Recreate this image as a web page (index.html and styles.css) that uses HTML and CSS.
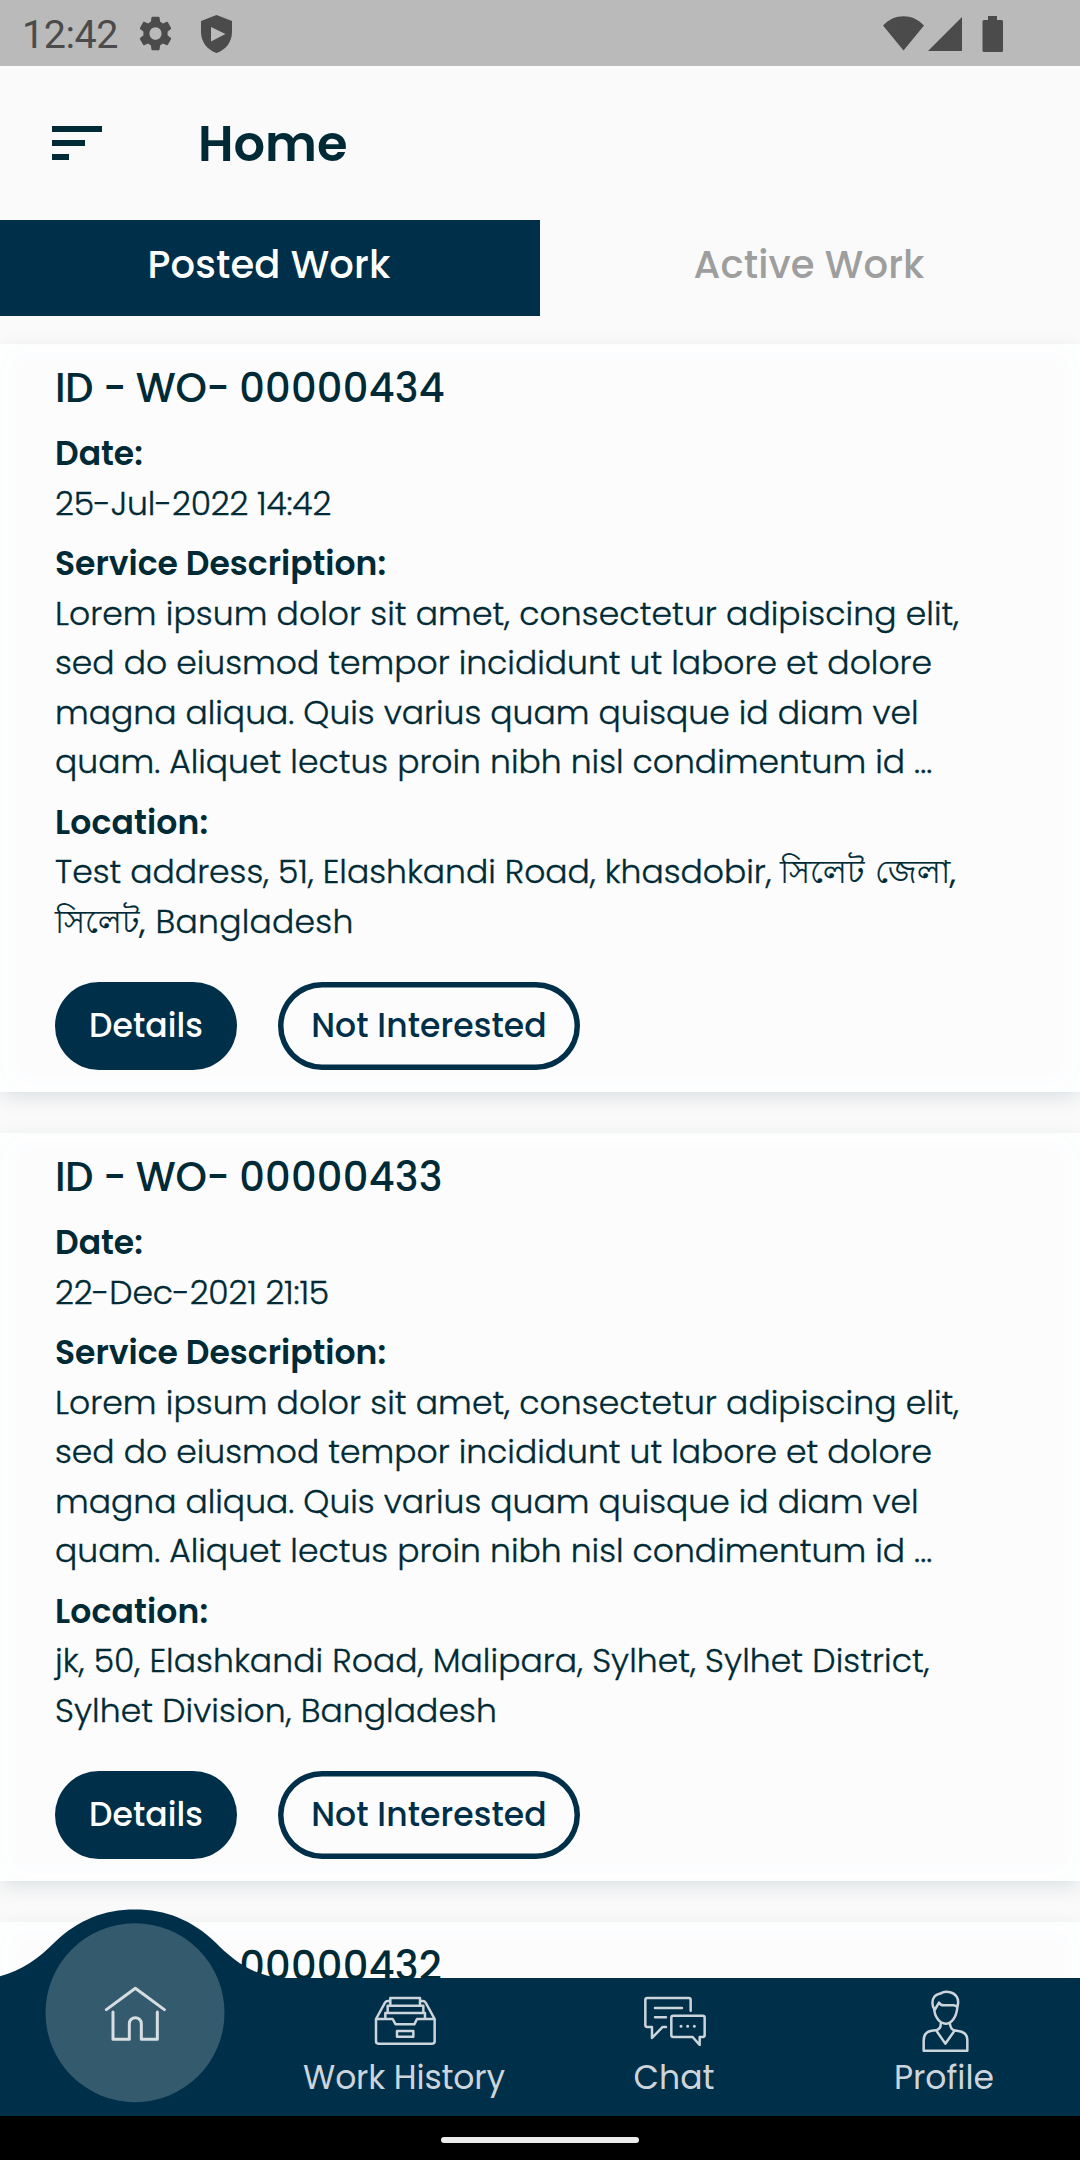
FILE: index.html
```
<!DOCTYPE html>
<html lang="en">
<head>
<meta charset="utf-8">
<title>Home</title>
<link rel="stylesheet" href="styles.css">
</head>
<body>
<div class="status">
  <span class="clock">12:42</span>
  <svg class="gear" viewBox="2.2 2 19.6 20" preserveAspectRatio="none"><path d="M19.14 12.94c.04-.3.06-.61.06-.94 0-.32-.02-.64-.07-.94l2.03-1.58c.18-.14.23-.41.12-.61l-1.92-3.32c-.12-.22-.37-.29-.59-.22l-2.39.96c-.5-.38-1.03-.7-1.62-.94l-.36-2.54c-.04-.24-.24-.41-.48-.41h-3.84c-.24 0-.43.17-.47.41l-.36 2.54c-.59.24-1.13.57-1.62.94l-2.39-.96c-.22-.08-.47 0-.59.22L2.74 8.87c-.12.21-.08.47.12.61l2.03 1.58c-.05.3-.09.63-.09.94s.02.64.07.94l-2.03 1.58c-.18.14-.23.41-.12.61l1.92 3.32c.12.22.37.29.59.22l2.39-.96c.5.38 1.03.7 1.62.94l.36 2.54c.05.24.24.41.48.41h3.84c.24 0 .44-.17.47-.41l.36-2.54c.59-.24 1.13-.56 1.62-.94l2.39.96c.22.08.47 0 .59-.22l1.92-3.32c.12-.22.07-.47-.12-.61l-2.01-1.58zM12 15.6c-1.98 0-3.6-1.62-3.6-3.6s1.62-3.6 3.6-3.6 3.6 1.62 3.6 3.6-1.62 3.6-3.6 3.6z"/></svg>
  <svg class="shield" viewBox="0 0 31 38"><path fill-rule="evenodd" d="M15.500 0L31 6V17C31 27 24.500 35 15.500 38 6.500 35 0 27 0 17V6ZM10 12V26.500L24.500 19Z"/></svg>
  <svg class="signals" viewBox="0 0 120 36"><path d="M0 9.500C11-3 30-3 41 9.500L20.500 34.500ZM45 35L79 1V35ZM99 4H105V0H114V4H118.500Q120 4 120 5.500V34.500Q120 36 118.500 36H101Q99.500 36 99.500 34.500V5.500Q99.500 4 101 4Z"/></svg>
</div>
<header class="header">
  <svg class="menu" viewBox="0 0 50 34"><path d="M0 0H50V6H0ZM0 14H33V20H0ZM0 28H17V34H0Z"/></svg>
  <h1 class="title">Home</h1>
</header>
<div class="tabs">
  <div class="tab tab-on">Posted Work</div>
  <div class="tab tab-off">Active Work</div>
</div>
<main class="list">
  <article class="card">
    <h2 class="wo"><span class="wo-prefix">ID - WO- </span>00000434</h2>
    <div class="label label-date">Date:</div>
    <div class="text date">25-Jul-2022 14:42</div>
    <div class="label label-service">Service Description:</div>
    <div class="text">
      <div class="lead">Lorem ipsum dolor sit amet, consectetur adipiscing elit,</div>
      <div>sed do eiusmod tempor incididunt ut labore et dolore</div>
      <div>magna aliqua. Quis varius quam quisque id diam vel</div>
      <div>quam. Aliquet lectus proin nibh nisl condimentum id ...</div>
    </div>
    <div class="label label-location">Location:</div>
    <div class="text address">
      <div>Test address, 51, Elashkandi Road, khasdobir, <span class="bn">সিলেট জেলা,</span></div>
      <div class="area"><span class="bn">সিলেট, </span>Bangladesh</div>
    </div>
    <div class="actions"><div class="btn btn-fill">Details</div><div class="btn btn-line">Not Interested</div></div>
  </article>
  <article class="card">
    <h2 class="wo"><span class="wo-prefix">ID - WO- </span>00000433</h2>
    <div class="label label-date">Date:</div>
    <div class="text date">22-Dec-2021 21:15</div>
    <div class="label label-service">Service Description:</div>
    <div class="text">
      <div class="lead">Lorem ipsum dolor sit amet, consectetur adipiscing elit,</div>
      <div>sed do eiusmod tempor incididunt ut labore et dolore</div>
      <div>magna aliqua. Quis varius quam quisque id diam vel</div>
      <div>quam. Aliquet lectus proin nibh nisl condimentum id ...</div>
    </div>
    <div class="label label-location">Location:</div>
    <div class="text address">
      <div class="lead">jk, 50, Elashkandi Road, Malipara, Sylhet, Sylhet District,</div>
      <div class="lead">Sylhet Division, Bangladesh</div>
    </div>
    <div class="actions"><div class="btn btn-fill">Details</div><div class="btn btn-line">Not Interested</div></div>
  </article>
  <article class="card">
    <h2 class="wo"><span class="wo-prefix">ID - WO- </span>00000432</h2>
  </article>
</main>
<nav class="nav">
  <div class="nav-item">
    <svg class="bump" viewBox="0 1909 300 207">
      <path fill="#002f49" d="M0 1976.300C22 1970 38 1959 55 1942 78 1920 104 1909.500 135 1909.500S192 1920 215 1942C236 1963 256 1978.400 292 1978.400V2116H0Z"/>
      <circle cx="135" cy="2012.700" r="89.500" fill="#335a6d"/>
      <g transform="translate(0 1860) scale(.33333)" fill="none" stroke="#d6dee2" stroke-width="9" stroke-linecap="round" stroke-linejoin="round"><path d="M319 449L406 385 493 449M339 456V538H388V491A18 18 0 0 1 424 491V538H472V456"/></g>
    </svg>
  </div>
  <div class="nav-item">
    <div class="nav-icon"><svg class="i-history" viewBox="282 288 188 150"><path d="M288 357V424Q288 431 295 431H457Q464 431 464 424V357M288 357L315 308Q318 303 324 303H330M464 357L437 308Q434 303 428 303H421M288 357H338L347 373H403L411 357H464M331 317V294H420V317M323 335V317H430V335M316 354V339H435V354M351 393H400V410H351Z"/></svg></div>
    <div class="nav-label n-history">Work History</div>
  </div>
  <div class="nav-item">
    <div class="nav-icon"><svg class="i-chat" viewBox="132 286 188 152"><path d="M272 330V298Q272 292 266 292H142Q136 292 136 298V373Q136 379 142 379H156V412L188 379H198M165 322H246M165 350H198M220 345H308Q314 345 314 351V403Q314 409 308 409H299V433L278 409H220Q214 409 214 403V351Q214 345 220 345Z"/><path class="dotted" d="M243 377H243.100M263 377H263.100M283 377H283.100"/></svg></div>
    <div class="nav-label">Chat</div>
  </div>
  <div class="nav-item">
    <div class="nav-icon"><svg class="i-profile" viewBox="962 268 144 188"><path d="M1021 370Q1022 383 1010 388L994 390Q970 394 970 420V450H1101V418Q1101 396 1077 392L1061 389Q1050 384 1049 370M1008 390L1035 429 1062 391M1003 328C994 316 994 298 1003 287 1010 279 1020 280 1025 276 1040 270 1060 274 1069 288 1077 300 1073 312 1071 320M1003 328L1016 306Q1020 314 1030 314H1060Q1068 315 1071 320M1001 322C1003 350 1018 369 1036 369S1068 350 1071 320"/></svg></div>
    <div class="nav-label">Profile</div>
  </div>
</nav>
<div class="sysbar"><div class="pill"></div></div>
</body>
</html>
```
FILE: styles.css
```
* { box-sizing: border-box; }
body {
  margin: 0;
  width: 1080px;
  height: 2160px;
  display: flex;
  flex-direction: column;
  overflow: hidden;
  background: #fafafa;
  color: #002a35;
  font-family: Poppins, Inter, sans-serif;
  white-space: nowrap;
}

/* Status bar */
.status {
  flex: none;
  height: 66px;
  background: #bababa;
  display: flex;
  align-items: center;
  padding: 1px 77px 0 22px;
  fill: #4b4b4b;
}
.clock {
  width: 117px;
  padding-top: 2px;
  font: 400 39.5px/60px Roboto, sans-serif;
  letter-spacing: -.5px;
  color: #4b4b4b;
}
.gear { width: 33px; height: 35px; }
.shield { width: 31px; height: 38px; margin-left: 29px; }
.signals { width: 120px; height: 36px; margin-left: auto; }

/* Header */
.header {
  flex: none;
  height: 154px;
  display: flex;
  align-items: center;
  padding-left: 52px;
  gap: 96px;
}
.menu { width: 50px; height: 34px; fill: #002a35; }
.title {
  margin: 2px 0 0;
  font-size: 49.5px;
  font-weight: 600;
  line-height: 152px;
}

/* Tabs */
.tabs { flex: none; display: flex; }
.tab {
  width: 540px;
  height: 96px;
  padding-right: 2px;
  text-align: center;
  font-size: 38.5px;
  font-weight: 500;
  line-height: 90px;
  letter-spacing: .15px;
}
.tab-on { background: #002f49; color: #fff; }
.tab-off { color: #9e9e9e; }

/* Work order list */
.list {
  flex: 1;
  min-height: 0;
  overflow: hidden;
  padding-top: 28px;
  display: flex;
  flex-direction: column;
  gap: 41px;
}
.card {
  flex: none;
  height: 748px;
  padding: 14px 55px 0;
  background: #fcfcfd;
  box-shadow: 0 6px 20px -2px rgba(0, 47, 73, .14), inset 0 0 24px 8px #fdfffe;
}
.wo {
  margin: 0;
  font-size: 40px;
  font-weight: 500;
  line-height: 60px;
  letter-spacing: .25px;
}
.wo-prefix { letter-spacing: -.45px; }
.label { font-size: 33px; font-weight: 600; line-height: 50px; }
.label-date { margin-top: 11px; }
.label-service { margin-top: 10px; }
.label-location { margin-top: 11px; letter-spacing: .15px; }
.text {
  font-size: 33px;
  font-weight: 300;
  line-height: 49.5px;
  -webkit-text-stroke: .35px currentColor;
}
.address { margin-top: -.5px; }
.date { letter-spacing: -.2px; }
.lead { letter-spacing: .08px; }
.area { letter-spacing: .25px; }
.bn {
  font-size: 32.3px;
  font-weight: 400;
  letter-spacing: 0;
  word-spacing: 1.5px;
  -webkit-text-stroke: .2px currentColor;
}
.actions { display: flex; gap: 41px; margin-top: 36px; }
.btn {
  height: 88px;
  border-radius: 44px;
  text-align: center;
  font-size: 33px;
  font-weight: 500;
  line-height: 87px;
  letter-spacing: .1px;
}
.btn-fill { width: 182px; background: #002f49; color: #fff; }
.btn-line { width: 302px; box-shadow: inset 0 0 0 5.5px #002f49; color: #002f49; }

/* Bottom navigation */
.nav {
  flex: none;
  position: relative;
  height: 137.6px;
  display: grid;
  grid-template-columns: repeat(4, 270px);
  background: #002f49;
}
.nav-item { padding-top: 10.6px; }
.bump { position: absolute; left: 0; bottom: 0; width: 300px; height: 207px; }
.nav-icon {
  height: 64px;
  display: flex;
  align-items: center;
  justify-content: center;
}
.nav-icon svg {
  fill: none;
  stroke: #ccd5db;
  stroke-width: 7.5;
  stroke-linejoin: round;
  stroke-linecap: round;
}
.i-history { width: 62.67px; height: 50px; }
.i-chat { width: 62.67px; height: 50.67px; }
.i-profile { width: 48px; height: 62.67px; }
.nav-icon .dotted { stroke-width: 9; }
.nav-label {
  padding-right: 2px;
  text-align: center;
  font-size: 33px;
  line-height: 49px;
  color: #ccd5db;
}
.n-history { letter-spacing: -.15px; }

/* System gesture bar */
.sysbar {
  flex: none;
  height: 44px;
  background: #000;
  display: flex;
  justify-content: center;
  padding-top: 21px;
}
.pill { width: 198px; height: 6px; border-radius: 3px; background: #ececec; }
```
